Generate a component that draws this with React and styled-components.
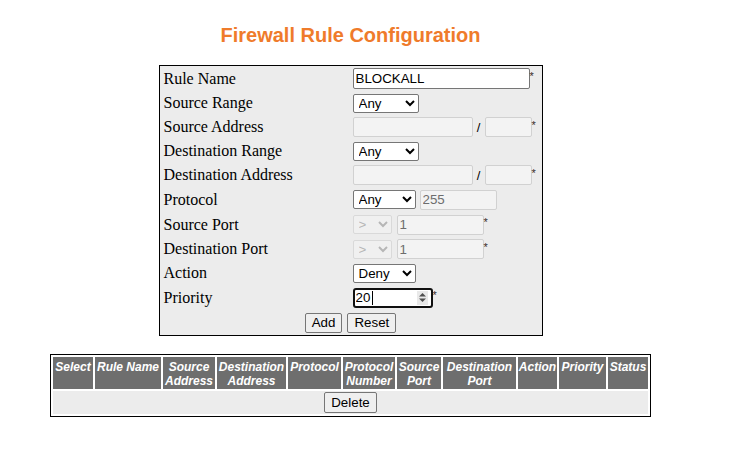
import styled, { createGlobalStyle } from "styled-components";

const GlobalStyle = createGlobalStyle`
  body {
    margin: 8px;
    background: #ffffff;
    font-family: "Liberation Serif", "Times New Roman", serif;
  }
`;

const ROW_HEIGHTS = [25, 24, 24, 24, 24, 25, 25, 24, 24, 25];

const COLUMNS = [
  { title: ["Select"], width: 40 },
  { title: ["Rule Name"], width: 66 },
  { title: ["Source", "Address"], width: 52 },
  { title: ["Destination", "Address"], width: 69 },
  { title: ["Protocol"], width: 53 },
  { title: ["Protocol", "Number"], width: 52 },
  { title: ["Source", "Port"], width: 44 },
  { title: ["Destination", "Port"], width: 73 },
  { title: ["Action"], width: 39 },
  { title: ["Priority"], width: 47 },
  { title: ["Status"], width: 40 },
];

export default function App() {
  return (
    <>
      <GlobalStyle />
      <Page>
        <Title>Firewall Rule Configuration</Title>

        <FormBox>
          <Row $h={ROW_HEIGHTS[0]}>
            <Label>Rule Name</Label>
            <TextInput $w={177} $h={21} defaultValue="BLOCKALL" />
            <Star>*</Star>
          </Row>
          <Row $h={ROW_HEIGHTS[1]}>
            <Label>Source Range</Label>
            <Select $w={66} defaultValue="any">
              <option value="any">Any</option>
            </Select>
          </Row>
          <Row $h={ROW_HEIGHTS[2]}>
            <Label>Source Address</Label>
            <TextInput $w={120} disabled />
            <Slash>/</Slash>
            <TextInput $w={47} disabled />
            <Star>*</Star>
          </Row>
          <Row $h={ROW_HEIGHTS[3]}>
            <Label>Destination Range</Label>
            <Select $w={66} defaultValue="any">
              <option value="any">Any</option>
            </Select>
          </Row>
          <Row $h={ROW_HEIGHTS[4]}>
            <Label>Destination Address</Label>
            <TextInput $w={120} disabled />
            <Slash>/</Slash>
            <TextInput $w={47} disabled />
            <Star>*</Star>
          </Row>
          <Row $h={ROW_HEIGHTS[5]}>
            <Label>Protocol</Label>
            <Select $w={63} defaultValue="any">
              <option value="any">Any</option>
            </Select>
            <TextInput $w={77} $gap={4} disabled defaultValue="255" />
          </Row>
          <Row $h={ROW_HEIGHTS[6]}>
            <Label>Source Port</Label>
            <Select $w={39} disabled defaultValue="gt">
              <option value="gt">&gt;</option>
            </Select>
            <TextInput $w={87} $gap={5} disabled defaultValue="1" />
            <Star>*</Star>
          </Row>
          <Row $h={ROW_HEIGHTS[7]}>
            <Label>Destination Port</Label>
            <Select $w={39} disabled defaultValue="gt">
              <option value="gt">&gt;</option>
            </Select>
            <TextInput $w={87} $gap={5} disabled defaultValue="1" />
            <Star>*</Star>
          </Row>
          <Row $h={ROW_HEIGHTS[8]}>
            <Label>Action</Label>
            <Select $w={63} defaultValue="deny">
              <option value="deny">Deny</option>
            </Select>
          </Row>
          <Row $h={ROW_HEIGHTS[9]}>
            <Label>Priority</Label>
            <PriorityBox>
              <PriorityInput defaultValue="20" />
              <Caret />
              <Spinner>
                <svg width="9" height="11" viewBox="0 0 9 11">
                  <path d="M4.5 1 L8 4.5 L1 4.5 Z" fill="#505050" />
                  <path d="M4.5 10 L8 6.5 L1 6.5 Z" fill="#505050" />
                </svg>
              </Spinner>
            </PriorityBox>
            <Star>*</Star>
          </Row>
          <ButtonRow>
            <Button type="button">Add</Button>
            <Button type="button">Reset</Button>
          </ButtonRow>
        </FormBox>

        <RuleTable $cols={COLUMNS.map((c) => `${c.width}px`).join(" ")}>
          {COLUMNS.map((c) => (
            <HeadCell key={c.title.join(" ")}>
              {c.title.map((line) => (
                <div key={line}>{line}</div>
              ))}
            </HeadCell>
          ))}
          <FooterCell>
            <Button type="button" $h={21}>
              Delete
            </Button>
          </FooterCell>
        </RuleTable>
      </Page>
    </>
  );
}

const Page = styled.div`
  width: 685px;
  display: flex;
  flex-direction: column;
  align-items: center;
`;

const Title = styled.div`
  margin-top: 16px;
  font-family: "Liberation Sans", Arial, sans-serif;
  font-weight: bold;
  font-size: 20px;
  line-height: 23px;
  color: #ef7b2b;
`;

const FormBox = styled.div`
  margin-top: 18px;
  width: 384px;
  box-sizing: border-box;
  border: 1px solid #000000;
  background: #ececec;
  display: flex;
  flex-direction: column;
`;

const Row = styled.div`
  height: ${(p) => p.$h}px;
  display: flex;
  align-items: center;
`;

const Label = styled.div`
  width: 193px;
  flex: none;
  box-sizing: border-box;
  padding-left: 4px;
  font-size: 16px;
  line-height: 18px;
  color: #000000;
`;

const TextInput = styled.input`
  width: ${(p) => p.$w}px;
  height: ${(p) => p.$h || 20}px;
  margin: 0 0 0 ${(p) => p.$gap || 0}px;
  box-sizing: border-box;
  padding: 1px 2px;
  border: 1px solid #767676;
  border-radius: 2px;
  background: #ffffff;
  font-family: "Liberation Sans", Arial, sans-serif;
  font-size: 13.33px;
  color: #000000;

  &:disabled {
    border-color: #d1d1d1;
    background: #f3f3f3;
    color: #6d6d6d;
  }
`;

const Select = styled.select`
  width: ${(p) => p.$w}px;
  height: 19px;
  margin: 0;
  box-sizing: border-box;
  border: 1px solid #767676;
  border-radius: 2px;
  background: #ffffff;
  font-family: "Liberation Sans", Arial, sans-serif;
  font-size: 13.33px;
  color: #000000;
  padding: 0 0 0 1px;

  &:disabled {
    border-color: #d1d1d1;
    background: #f3f3f3;
    color: #a0a0a0;
  }
`;

const Star = styled.span`
  align-self: flex-start;
  margin-top: 5px;
  font-family: "Liberation Sans", Arial, sans-serif;
  font-size: 11px;
  line-height: 11px;
  color: #3a2a2a;
`;

const Slash = styled.span`
  width: 12px;
  text-align: center;
  font-family: "Liberation Sans", Arial, sans-serif;
  font-size: 13px;
  color: #000000;
`;

const PriorityBox = styled.div`
  width: 80px;
  height: 20px;
  box-sizing: border-box;
  border: 2px solid #101010;
  border-radius: 3px;
  background: #ffffff;
  display: flex;
  align-items: center;
`;

const PriorityInput = styled.input`
  width: 16px;
  border: none;
  outline: none;
  padding: 0 0 0 1px;
  margin: 0;
  background: transparent;
  font-family: "Liberation Sans", Arial, sans-serif;
  font-size: 13.33px;
  color: #000000;
`;

const Caret = styled.span`
  width: 1px;
  height: 14px;
  background: #000000;
`;

const Spinner = styled.div`
  margin-left: auto;
  margin-right: 3px;
  width: 11px;
  height: 14px;
  background: #e9e9e9;
  display: flex;
  align-items: center;
  justify-content: center;
`;

const ButtonRow = styled.div`
  height: 25px;
  display: flex;
  align-items: center;
  justify-content: center;
  gap: 5px;
`;

const Button = styled.button`
  height: ${(p) => p.$h || 20}px;
  margin: 0;
  padding: 0 6px;
  border: 1px solid #767676;
  border-radius: 2px;
  background: #efefef;
  font-family: "Liberation Sans", Arial, sans-serif;
  font-size: 13.33px;
  color: #000000;
`;

const RuleTable = styled.div`
  margin-top: 18px;
  border: 1px solid #000000;
  background: #ffffff;
  padding: 2px;
  display: grid;
  grid-template-columns: ${(p) => p.$cols};
  grid-template-rows: 32px 23px;
  gap: 2px;
`;

const HeadCell = styled.div`
  background: #6e6e6e;
  padding-top: 3px;
  text-align: center;
  font-family: "Liberation Sans", Arial, sans-serif;
  font-weight: bold;
  font-style: italic;
  font-size: 12px;
  line-height: 14px;
  color: #ffffff;
  white-space: nowrap;
`;

const FooterCell = styled.div`
  grid-column: 1 / -1;
  background: #ececec;
  display: flex;
  align-items: center;
  justify-content: center;
`;
